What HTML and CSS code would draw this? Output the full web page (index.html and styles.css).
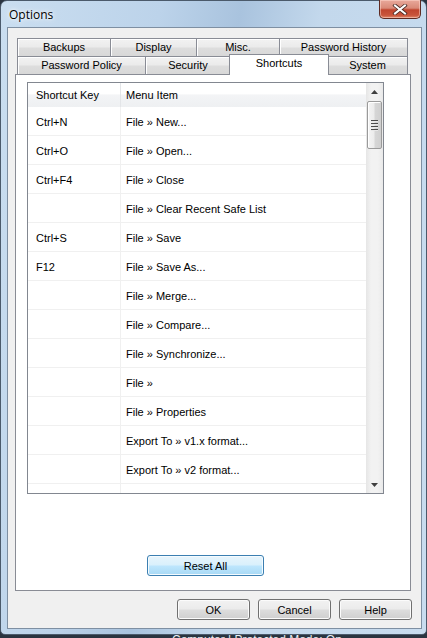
FILE: index.html
```html
<!DOCTYPE html>
<html>
<head>
<meta charset="utf-8">
<link rel="stylesheet" href="styles.css">
</head>
<body>
<div class="window">
  <div class="titlebar">
    <span class="title">Options</span>
    <div class="close">
      <svg width="16" height="11" viewBox="0 0 16 11"><path d="M3 1.5 L13 9.5 M13 1.5 L3 9.5" stroke="#4a2a24" stroke-width="3.6" stroke-linecap="square"/><path d="M3 1.5 L13 9.5 M13 1.5 L3 9.5" stroke="#fff" stroke-width="2" stroke-linecap="square"/></svg>
    </div>
  </div>
  <div class="client">
    <div class="tabs">
      <div class="tabrow row1">
        <div class="tab">Backups</div>
        <div class="tab">Display</div>
        <div class="tab">Misc.</div>
        <div class="tab last">Password History</div>
      </div>
      <div class="tabrow row2">
        <div class="tab">Password Policy</div>
        <div class="tab">Security</div>
        <div class="tab selected">Shortcuts</div>
        <div class="tab last">System</div>
      </div>
    </div>
    <div class="panel">
      <div class="list">
        <div class="listmain">
          <div class="header">
            <div class="hcell c1">Shortcut Key</div>
            <div class="hcell c2">Menu Item</div>
          </div>
          <div class="rows">
            <div class="row"><div class="cell c1">Ctrl+N</div><div class="cell c2">File » New...</div></div>
            <div class="row"><div class="cell c1">Ctrl+O</div><div class="cell c2">File » Open...</div></div>
            <div class="row"><div class="cell c1">Ctrl+F4</div><div class="cell c2">File » Close</div></div>
            <div class="row"><div class="cell c1"></div><div class="cell c2">File » Clear Recent Safe List</div></div>
            <div class="row"><div class="cell c1">Ctrl+S</div><div class="cell c2">File » Save</div></div>
            <div class="row"><div class="cell c1">F12</div><div class="cell c2">File » Save As...</div></div>
            <div class="row"><div class="cell c1"></div><div class="cell c2">File » Merge...</div></div>
            <div class="row"><div class="cell c1"></div><div class="cell c2">File » Compare...</div></div>
            <div class="row"><div class="cell c1"></div><div class="cell c2">File » Synchronize...</div></div>
            <div class="row"><div class="cell c1"></div><div class="cell c2">File » </div></div>
            <div class="row"><div class="cell c1"></div><div class="cell c2">File » Properties</div></div>
            <div class="row"><div class="cell c1"></div><div class="cell c2">Export To » v1.x format...</div></div>
            <div class="row"><div class="cell c1"></div><div class="cell c2">Export To » v2 format...</div></div>
            <div class="row"><div class="cell c1"></div><div class="cell c2"></div></div>
          </div>
        </div>
        <div class="scrollbar">
          <div class="sbtn"><svg width="7" height="4" viewBox="0 0 7 4"><path d="M3.5 0 L7 4 L0 4 Z" fill="#404040"/></svg></div>
          <div class="thumb"><span class="grip"></span><span class="grip"></span><span class="grip"></span><span class="grip"></span></div>
          <div class="track"></div>
          <div class="sbtn"><svg width="7" height="4" viewBox="0 0 7 4"><path d="M0 0 L7 0 L3.5 4 Z" fill="#404040"/></svg></div>
        </div>
      </div>
      <div class="resetwrap">
        <button class="btn default reset">Reset All</button>
      </div>
    </div>
    <div class="buttons">
      <button class="btn">OK</button>
      <button class="btn">Cancel</button>
      <button class="btn">Help</button>
    </div>
  </div>
</div>
<div class="strip"><span class="striptext">Computer | Protected Mode: On</span></div>
</body>
</html>
```
FILE: styles.css
```css
html, body {
  margin: 0;
  padding: 0;
}
body {
  background: #2a3440;
  width: 427px;
  height: 638px;
  overflow: hidden;
  font-family: "Liberation Sans", Arial, sans-serif;
  font-size: 11px;
  color: #000;
}
.window {
  box-sizing: border-box;
  width: 427px;
  height: 635px;
  border: 1px solid #4b5a6b;
  border-radius: 7px 7px 5px 5px;
  background: linear-gradient(100deg, #cadef0 0%, #bcd3ea 30%, #a9c3de 45%, #c3d8ec 60%, #c8dcef 100%);
  display: flex;
  flex-direction: column;
}
.titlebar {
  height: 26px;
  display: flex;
  justify-content: space-between;
  align-items: flex-start;
  padding-left: 8px;
}
.title {
  font-family: "Open Sans", "Noto Sans", sans-serif;
  font-size: 12px;
  line-height: 12px;
  margin-top: 8px;
  color: #000;
  text-shadow: 0 0 6px #fff, 0 0 3px #fff;
}
.close {
  box-sizing: border-box;
  width: 42px;
  height: 19px;
  margin-top: -1px;
  margin-right: 5px;
  border: 1px solid #5e2a22;
  border-top: none;
  border-radius: 0 0 5px 5px;
  background: linear-gradient(#e9a99b 0%, #d98a78 45%, #c0452e 55%, #c9553b 85%, #e08a6c 100%);
  box-shadow: inset 0 0 0 1px rgba(255,220,210,0.5);
  display: flex;
  align-items: center;
  justify-content: center;
}
.client {
  box-sizing: border-box;
  width: 415px;
  height: 602px;
  margin-left: 6px;
  border: 1px solid #7e8fa2;
  background: #f0f0f0;
  display: flex;
  flex-direction: column;
}
.tabs {
  margin: 10px 0 0 9px;
  width: 391px;
  position: relative;
  z-index: 2;
}
.tabrow {
  display: grid;
  height: 18px;
}
.row1 {
  grid-template-columns: 93px 86px 83px 129px;
}
.row2 {
  grid-template-columns: 128px 85px 98px 80px;
}
.tab {
  box-sizing: border-box;
  border-top: 1px solid #898c95;
  border-left: 1px solid #898c95;
  background: linear-gradient(#f2f2f2 0%, #ebebeb 45%, #dddddd 55%, #d8d8d8 100%);
  box-shadow: inset 1px 1px 0 #fff;
  text-align: center;
  line-height: 17px;
  height: 18px;
  white-space: nowrap;
}
.tab.last {
  border-right: 1px solid #898c95;
}
.tab.selected {
  position: relative;
  margin: -2px -1px -1px -1px;
  height: 21px;
  border-right: 1px solid #898c95;
  background: #fff;
  box-shadow: none;
  line-height: 17px;
  z-index: 3;
}
.tab.selected + .tab {
  border-left: none;
}
.panel {
  box-sizing: border-box;
  width: 396px;
  height: 517px;
  margin-left: 7px;
  border: 1px solid #898c95;
  background: #fff;
  display: flex;
  flex-direction: column;
  position: relative;
  z-index: 1;
}
.list {
  box-sizing: border-box;
  width: 357px;
  height: 412px;
  margin: 7px 0 0 11px;
  border: 1px solid #828790;
  display: flex;
}
.listmain {
  flex: 1;
  overflow: hidden;
  display: flex;
  flex-direction: column;
}
.header {
  display: grid;
  grid-template-columns: 93px 1fr;
  height: 24px;
  background: linear-gradient(#ffffff 0%, #ffffff 45%, #f3f4f6 50%, #eef0f2 100%);
  flex: none;
}
.hcell {
  line-height: 24px;
  white-space: nowrap;
}
.hcell.c1 {
  padding-left: 8px;
  border-right: 1px solid #e3e5e8;
}
.hcell.c2 {
  padding-left: 5px;
}
.rows {
  flex: 1;
}
.row {
  display: grid;
  grid-template-columns: 93px 1fr;
  height: 29px;
  box-sizing: border-box;
  border-bottom: 1px solid #f0f0f0;
}
.cell {
  line-height: 26px;
  padding-top: 2px;
  white-space: nowrap;
}
.cell.c1 {
  padding-left: 8px;
  border-right: 1px solid #f0f0f0;
}
.cell.c2 {
  padding-left: 5px;
}
.scrollbar {
  width: 17px;
  flex: none;
  display: flex;
  flex-direction: column;
  background: linear-gradient(90deg, #e6e6e6 0%, #f2f2f2 30%, #f2f2f2 70%, #e9e9e9 100%);
}
.sbtn {
  height: 17px;
  flex: none;
  display: flex;
  align-items: center;
  justify-content: center;
}
.thumb {
  box-sizing: border-box;
  flex: none;
  height: 48px;
  margin: 1px 1px 0 1px;
  border: 1px solid #9a9a9a;
  border-radius: 2px;
  background: linear-gradient(90deg, #f4f4f4 0%, #ececec 45%, #d6d6d6 55%, #cfcfcf 100%);
  box-shadow: inset 1px 1px 0 #fff;
  display: flex;
  flex-direction: column;
  align-items: center;
  justify-content: center;
  gap: 1px;
}
.grip {
  display: block;
  width: 7px;
  height: 1px;
  background: #4a4a4a;
  border-bottom: 1px solid #e8e8e8;
}
.track {
  flex: 1;
}
.resetwrap {
  margin-top: 61px;
  padding-left: 131px;
}
.btn {
  box-sizing: border-box;
  font-family: "Liberation Sans", Arial, sans-serif;
  font-size: 11px;
  color: #000;
  width: 73px;
  height: 21px;
  padding: 0;
  border: 1px solid #707070;
  border-radius: 3px;
  background: linear-gradient(#f2f2f2 0%, #ebebeb 48%, #dddddd 52%, #cfcfcf 100%);
  box-shadow: inset 0 0 0 1px #fbfbfb;
}
.btn.default {
  border-color: #3c7fb1;
  background: linear-gradient(#e8f5fc 0%, #d9f0fc 48%, #bee6fd 52%, #a7d9f5 100%);
  box-shadow: inset 0 0 0 1px #f4fbff;
}
.reset {
  width: 117px;
}
.buttons {
  display: flex;
  justify-content: flex-end;
  gap: 8px;
  padding-right: 9px;
  margin-top: 8px;
}
.strip {
  height: 3px;
  overflow: hidden;
  padding-left: 172px;
}
.striptext {
  display: block;
  font-family: "Liberation Sans", Arial, sans-serif;
  font-size: 12px;
  line-height: 12px;
  margin-top: -1px;
  color: #e8eef4;
}
```
